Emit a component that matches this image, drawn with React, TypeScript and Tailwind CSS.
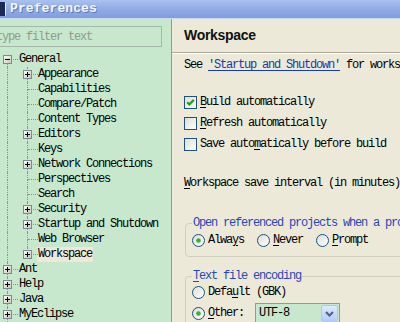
import React from "react";

const mono = "font-['Liberation_Mono',monospace] text-[12px] tracking-[-1.2px]";

function Box({ open }: { open?: boolean }) {
  return (
    <svg width="9" height="9" viewBox="0 0 9 9" className="absolute left-[3px] top-[3px]">
      <defs>
        <linearGradient id="bx" x1="0" y1="0" x2="1" y2="1">
          <stop offset="0" stopColor="#ffffff" />
          <stop offset="1" stopColor="#c6c2b2" />
        </linearGradient>
      </defs>
      <rect x="0.5" y="0.5" width="8" height="8" fill="url(#bx)" stroke="#7a8a99" />
      <rect x="2" y="4" width="5" height="1" fill="#000" />
      {!open && <rect x="4" y="2" width="1" height="5" fill="#000" />}
    </svg>
  );
}

function Gutter({
  vTop = true,
  vBottom = true,
  h = true,
  box,
  open,
  w = "w-[19px]",
}: {
  vTop?: boolean;
  vBottom?: boolean;
  h?: boolean;
  box?: boolean;
  open?: boolean;
  w?: string;
}) {
  return (
    <div className={`relative ${w} h-full shrink-0`}>
      {vTop && <div className="absolute left-[7px] top-0 h-[8px] border-l border-dotted border-[#8c948c]" />}
      {vBottom && <div className="absolute left-[7px] top-[8px] bottom-0 border-l border-dotted border-[#8c948c]" />}
      {h && <div className="absolute left-[8px] top-[7px] w-[10px] border-t border-dotted border-[#8c948c]" />}
      {box && <Box open={open} />}
    </div>
  );
}

function Mn({ c }: { c: string }) {
  return <span className="underline underline-offset-2">{c}</span>;
}

function CheckBox({ checked }: { checked?: boolean }) {
  return (
    <svg width="13" height="13" viewBox="0 0 13 13" className="shrink-0">
      <defs>
        <linearGradient id="cb" x1="0" y1="0" x2="1" y2="1">
          <stop offset="0" stopColor="#dcdcd6" />
          <stop offset="1" stopColor="#ffffff" />
        </linearGradient>
      </defs>
      <rect x="0.5" y="0.5" width="12" height="12" fill="url(#cb)" stroke="#1c5180" />
      {checked && (
        <path d="M3.2 6.2 L5.3 8.4 L9.8 3.9" stroke="#21a121" strokeWidth="2.2" fill="none" />
      )}
    </svg>
  );
}

function Radio({ checked }: { checked?: boolean }) {
  return (
    <svg width="13" height="13" viewBox="0 0 13 13" className="shrink-0">
      <defs>
        <linearGradient id="rd" x1="0" y1="0" x2="1" y2="1">
          <stop offset="0" stopColor="#dcdcd6" />
          <stop offset="1" stopColor="#ffffff" />
        </linearGradient>
      </defs>
      <circle cx="6.5" cy="6.5" r="6" fill="url(#rd)" stroke="#1c5180" />
      {checked && <circle cx="6.5" cy="6.5" r="2.3" fill="#2fb52f" />}
    </svg>
  );
}

type Child = { label: string; plus?: boolean; sel?: boolean };

const children: Child[] = [
  { label: "Appearance", plus: true },
  { label: "Capabilities" },
  { label: "Compare/Patch" },
  { label: "Content Types" },
  { label: "Editors", plus: true },
  { label: "Keys" },
  { label: "Network Connections", plus: true },
  { label: "Perspectives" },
  { label: "Search" },
  { label: "Security", plus: true },
  { label: "Startup and Shutdown", plus: true },
  { label: "Web Browser" },
  { label: "Workspace", plus: true, sel: true },
];

const tops = ["Ant", "Help", "Java", "MyEclipse"];

export default function App() {
  return (
    <div className="w-[400px] h-[322px] overflow-hidden flex flex-col bg-[#ece9d8]">
      {/* Title bar */}
      <div className="h-[19px] shrink-0 flex items-center bg-gradient-to-b from-[#a9c2f0] via-[#90abe6] to-[#809ddf] border-b border-[#c9d6f0]">
        <div className="w-[6px] h-[14px] bg-[#1b2a58] border-r border-[#e8eefc] mr-[4px] rounded-r-[1px]" />
        <span className="font-['Liberation_Mono',monospace] font-bold text-[13px] tracking-[0.1px] text-[#f2f6ff] [text-shadow:1px_1px_0_#5f79b8]">
          Preferences
        </span>
      </div>

      <div className="flex flex-1 min-h-0">
        {/* Left pane */}
        <div className="w-[171px] shrink-0 bg-[#c7e8cc] flex flex-col overflow-hidden">
          <div className="pt-[7px] pr-[9px]">
            <div className="ml-[-6px] h-[21px] border border-[#a6b8a9] bg-[#c7e8cc] flex items-center">
              <span className={`${mono} text-[#8f9c91] pl-[1px] whitespace-nowrap`}>type filter text</span>
            </div>
          </div>
          <div className={`${mono} text-[#000] mt-[5px] flex flex-col`}>
            <div className="flex h-[15px] items-stretch">
              <Gutter vTop={false} box open />
              <span className="leading-[15px] whitespace-nowrap">General</span>
            </div>
            {children.map((c, i) => {
              const last = i === children.length - 1;
              return (
                <div key={c.label} className="flex h-[15px] items-stretch">
                  <Gutter h={false} w="w-[20px]" />
                  <Gutter vBottom={!last} box={c.plus} w="w-[18px]" />
                  <span
                    className={`leading-[15px] whitespace-nowrap px-[1px] -ml-[1px] ${
                      c.sel ? "bg-[#ece9d8]" : ""
                    }`}
                  >
                    {c.label}
                  </span>
                </div>
              );
            })}
            {tops.map((t) => (
              <div key={t} className="flex h-[15px] items-stretch">
                <Gutter box />
                <span className="leading-[15px] whitespace-nowrap">{t}</span>
              </div>
            ))}
          </div>
        </div>

        {/* Right pane */}
        <div className="flex-1 min-w-0 border-l border-[#9a9a8c] flex flex-col overflow-hidden bg-[#ece9d8]">
          <div className="h-[34px] shrink-0 flex items-center pl-[12px] border-b border-[#aca899] shadow-[0_1px_0_#ffffff]">
            <span className="font-['Liberation_Sans',sans-serif] font-bold text-[14px] tracking-[-0.3px] text-[#111]">
              Workspace
            </span>
          </div>
          <div className={`${mono} text-black pl-[12px] flex flex-col whitespace-nowrap`}>
            <div className="mt-[5px] h-[15px] leading-[15px]">
              See{" "}
              <span className="text-[#1a3aa6] underline underline-offset-2">'Startup and Shutdown'</span> for workspace
              startup and shutdown preferences
            </div>
            <div className="mt-[19px] flex flex-col">
              {[
                { c: true, l: <><Mn c="B" />uild automatically</> },
                { c: false, l: <><Mn c="R" />efresh automatically</> },
                { c: false, l: <>Save auto<Mn c="m" />atically before build</> },
              ].map((r, i) => (
                <div key={i} className="h-[21px] flex items-center gap-[3px]">
                  <CheckBox checked={r.c} />
                  <span className="leading-[15px]">{r.l}</span>
                </div>
              ))}
            </div>
            <div className="mt-[21px] h-[15px] leading-[15px]">
              <Mn c="W" />orkspace save interval (in minutes):
            </div>

            <fieldset className="mt-[25px] ml-[1px] border border-[#d0d0bf] rounded-[4px] pl-[6px] pb-[7px] w-[260px]">
              <legend className="text-[#1f48b8] px-[1px] leading-[15px]">
                Open referenced projects when a project is opened
              </legend>
              <div className="h-[18px] flex items-center">
                <div className="flex items-center gap-[3px]">
                  <Radio checked />
                  <span className="leading-[15px]">Alwa<Mn c="y" />s</span>
                </div>
                <div className="flex items-center gap-[3px] ml-[13px]">
                  <Radio />
                  <span className="leading-[15px]"><Mn c="N" />ever</span>
                </div>
                <div className="flex items-center gap-[3px] ml-[13px]">
                  <Radio />
                  <span className="leading-[15px]"><Mn c="P" />rompt</span>
                </div>
              </div>
            </fieldset>

            <fieldset className="mt-[12px] ml-[1px] border border-[#d0d0bf] rounded-[4px] pl-[6px] pb-[7px] w-[260px]">
              <legend className="text-[#1f48b8] px-[1px] leading-[15px]">
                <Mn c="T" />ext file encoding
              </legend>
              <div className="pt-[1px] flex flex-col">
                <div className="h-[15px] flex items-center gap-[3px]">
                  <Radio />
                  <span className="leading-[15px]">Defa<Mn c="u" />lt (GBK)</span>
                </div>
                <div className="mt-[3px] h-[21px] flex items-center">
                  <Radio checked />
                  <span className="leading-[15px] ml-[3px]"><Mn c="O" />ther:</span>
                  <div className="ml-[11px] w-[85px] h-[21px] border border-[#7f9db9] bg-[#c7e8cc] flex items-center">
                    <span className="pl-[3px] flex-1 leading-[15px]">UTF-8</span>
                    <div className="w-[17px] h-[17px] mr-[1px] rounded-[2px] bg-gradient-to-b from-[#e0e9fd] to-[#b6cbf7] border border-[#b1c6f6] flex items-center justify-center">
                      <svg width="9" height="6" viewBox="0 0 9 6">
                        <path d="M1 1 L4.5 4.5 L8 1" stroke="#4d6185" strokeWidth="2" fill="none" />
                      </svg>
                    </div>
                  </div>
                </div>
              </div>
            </fieldset>
          </div>
        </div>
      </div>
    </div>
  );
}
